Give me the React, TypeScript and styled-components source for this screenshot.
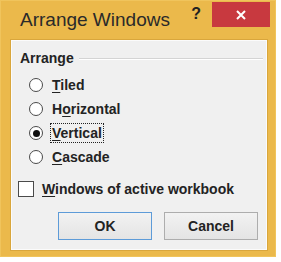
import React from 'react';
import styled, { createGlobalStyle } from 'styled-components';

const GlobalStyle = createGlobalStyle`
  body {
    margin: 0;
    background: #ffffff;
  }
`;

const Frame = styled.div`
  box-sizing: border-box;
  width: 276px;
  height: 257px;
  background: #ebb94b;
  border: 1px solid #f0c45c;
  padding: 0 8px 6px 10px;
  display: flex;
  flex-direction: column;
  font-family: 'Liberation Sans', Arial, sans-serif;
`;

const TitleBar = styled.div`
  height: 39px;
  display: flex;
  align-items: flex-start;
`;

const Title = styled.div`
  margin: 8px 0 0 9px;
  font-size: 19px;
  line-height: 22px;
  color: #2a2a2a;
`;

const Help = styled.div`
  margin: 4px 11px 0 auto;
  font-size: 16px;
  line-height: 18px;
  font-weight: 700;
  color: #222;
`;

const CloseButton = styled.div`
  margin: 1px -3px 0 0;
  width: 58px;
  height: 25px;
  background: #c8393f;
  display: flex;
  align-items: center;
  justify-content: center;
`;

const Body = styled.div`
  flex: 1;
  background: #f0f0f0;
  border: 1px solid #fbfbfb;
  outline: 1px solid #d9a63c;
  padding: 9px 0 0 0;
  display: flex;
  flex-direction: column;
  font-size: 14px;
  font-weight: 700;
  color: #232323;
`;

const GroupHeader = styled.div`
  display: flex;
  align-items: center;
  height: 16px;
  line-height: 16px;
  padding-left: 8px;
  margin-bottom: 7px;
`;

const GroupLine = styled.div`
  flex: 1;
  height: 1px;
  margin: 0 3px 0 5px;
  background: #d4d4d4;
  box-shadow: 0 1px 0 #ffffff;
`;

const Row = styled.div<{ $indent: number; $top?: number }>`
  height: 24px;
  display: flex;
  align-items: center;
  padding-left: ${(p) => p.$indent}px;
  margin-top: ${(p) => p.$top ?? 0}px;
`;

const RadioCircle = styled.div<{ $checked?: boolean }>`
  box-sizing: border-box;
  width: 14px;
  height: 14px;
  border-radius: 50%;
  border: 1px solid #4a4a4a;
  background: #ffffff;
  display: flex;
  align-items: center;
  justify-content: center;
  &::after {
    content: '';
    width: 7px;
    height: 7px;
    border-radius: 50%;
    background: ${(p) => (p.$checked ? '#111' : 'transparent')};
  }
`;

const CheckBox = styled.div`
  box-sizing: border-box;
  width: 16px;
  height: 16px;
  border: 1px solid #4a4a4a;
  background: #ffffff;
`;

const Label = styled.span<{ $focused?: boolean; $gap: number }>`
  margin-left: ${(p) => p.$gap}px;
  padding: 1px 1px;
  line-height: 16px;
  border: 1px dotted ${(p) => (p.$focused ? '#222' : 'transparent')};
  u {
    text-decoration-thickness: 1px;
    text-underline-offset: 2px;
  }
`;

const ButtonRow = styled.div`
  margin-top: 11px;
  display: flex;
  justify-content: flex-end;
  gap: 12px;
  padding-right: 8px;
`;

const Button = styled.div<{ $default?: boolean }>`
  box-sizing: border-box;
  width: 94px;
  height: 28px;
  display: flex;
  align-items: center;
  justify-content: center;
  border: 1px solid ${(p) => (p.$default ? '#5d9bd8' : '#adadad')};
  background: linear-gradient(#f2f2f2, #e4e4e4);
  color: #232323;
`;

const radios = [
  { key: 'T', rest: 'iled', pre: '' },
  { key: 'o', rest: 'rizontal', pre: 'H' },
  { key: 'V', rest: 'ertical', pre: '', checked: true },
  { key: 'C', rest: 'ascade', pre: '' },
];

export default function App() {
  return (
    <>
      <GlobalStyle />
      <Frame>
        <TitleBar>
          <Title>Arrange Windows</Title>
          <Help>?</Help>
          <CloseButton>
            <svg width="10" height="10" viewBox="0 0 10 10">
              <path d="M1 1 L9 9 M9 1 L1 9" stroke="#fff" strokeWidth="2" />
            </svg>
          </CloseButton>
        </TitleBar>
        <Body>
          <GroupHeader>
            Arrange
            <GroupLine />
          </GroupHeader>
          {radios.map((r) => (
            <Row key={r.rest} $indent={17}>
              <RadioCircle $checked={r.checked} />
              <Label $gap={7} $focused={r.checked}>
                {r.pre}
                <u>{r.key}</u>
                {r.rest}
              </Label>
            </Row>
          ))}
          <Row $indent={6} $top={8}>
            <CheckBox />
            <Label $gap={6}>
              <u>W</u>indows of active workbook
            </Label>
          </Row>
          <ButtonRow>
            <Button $default>OK</Button>
            <Button>Cancel</Button>
          </ButtonRow>
        </Body>
      </Frame>
    </>
  );
}
